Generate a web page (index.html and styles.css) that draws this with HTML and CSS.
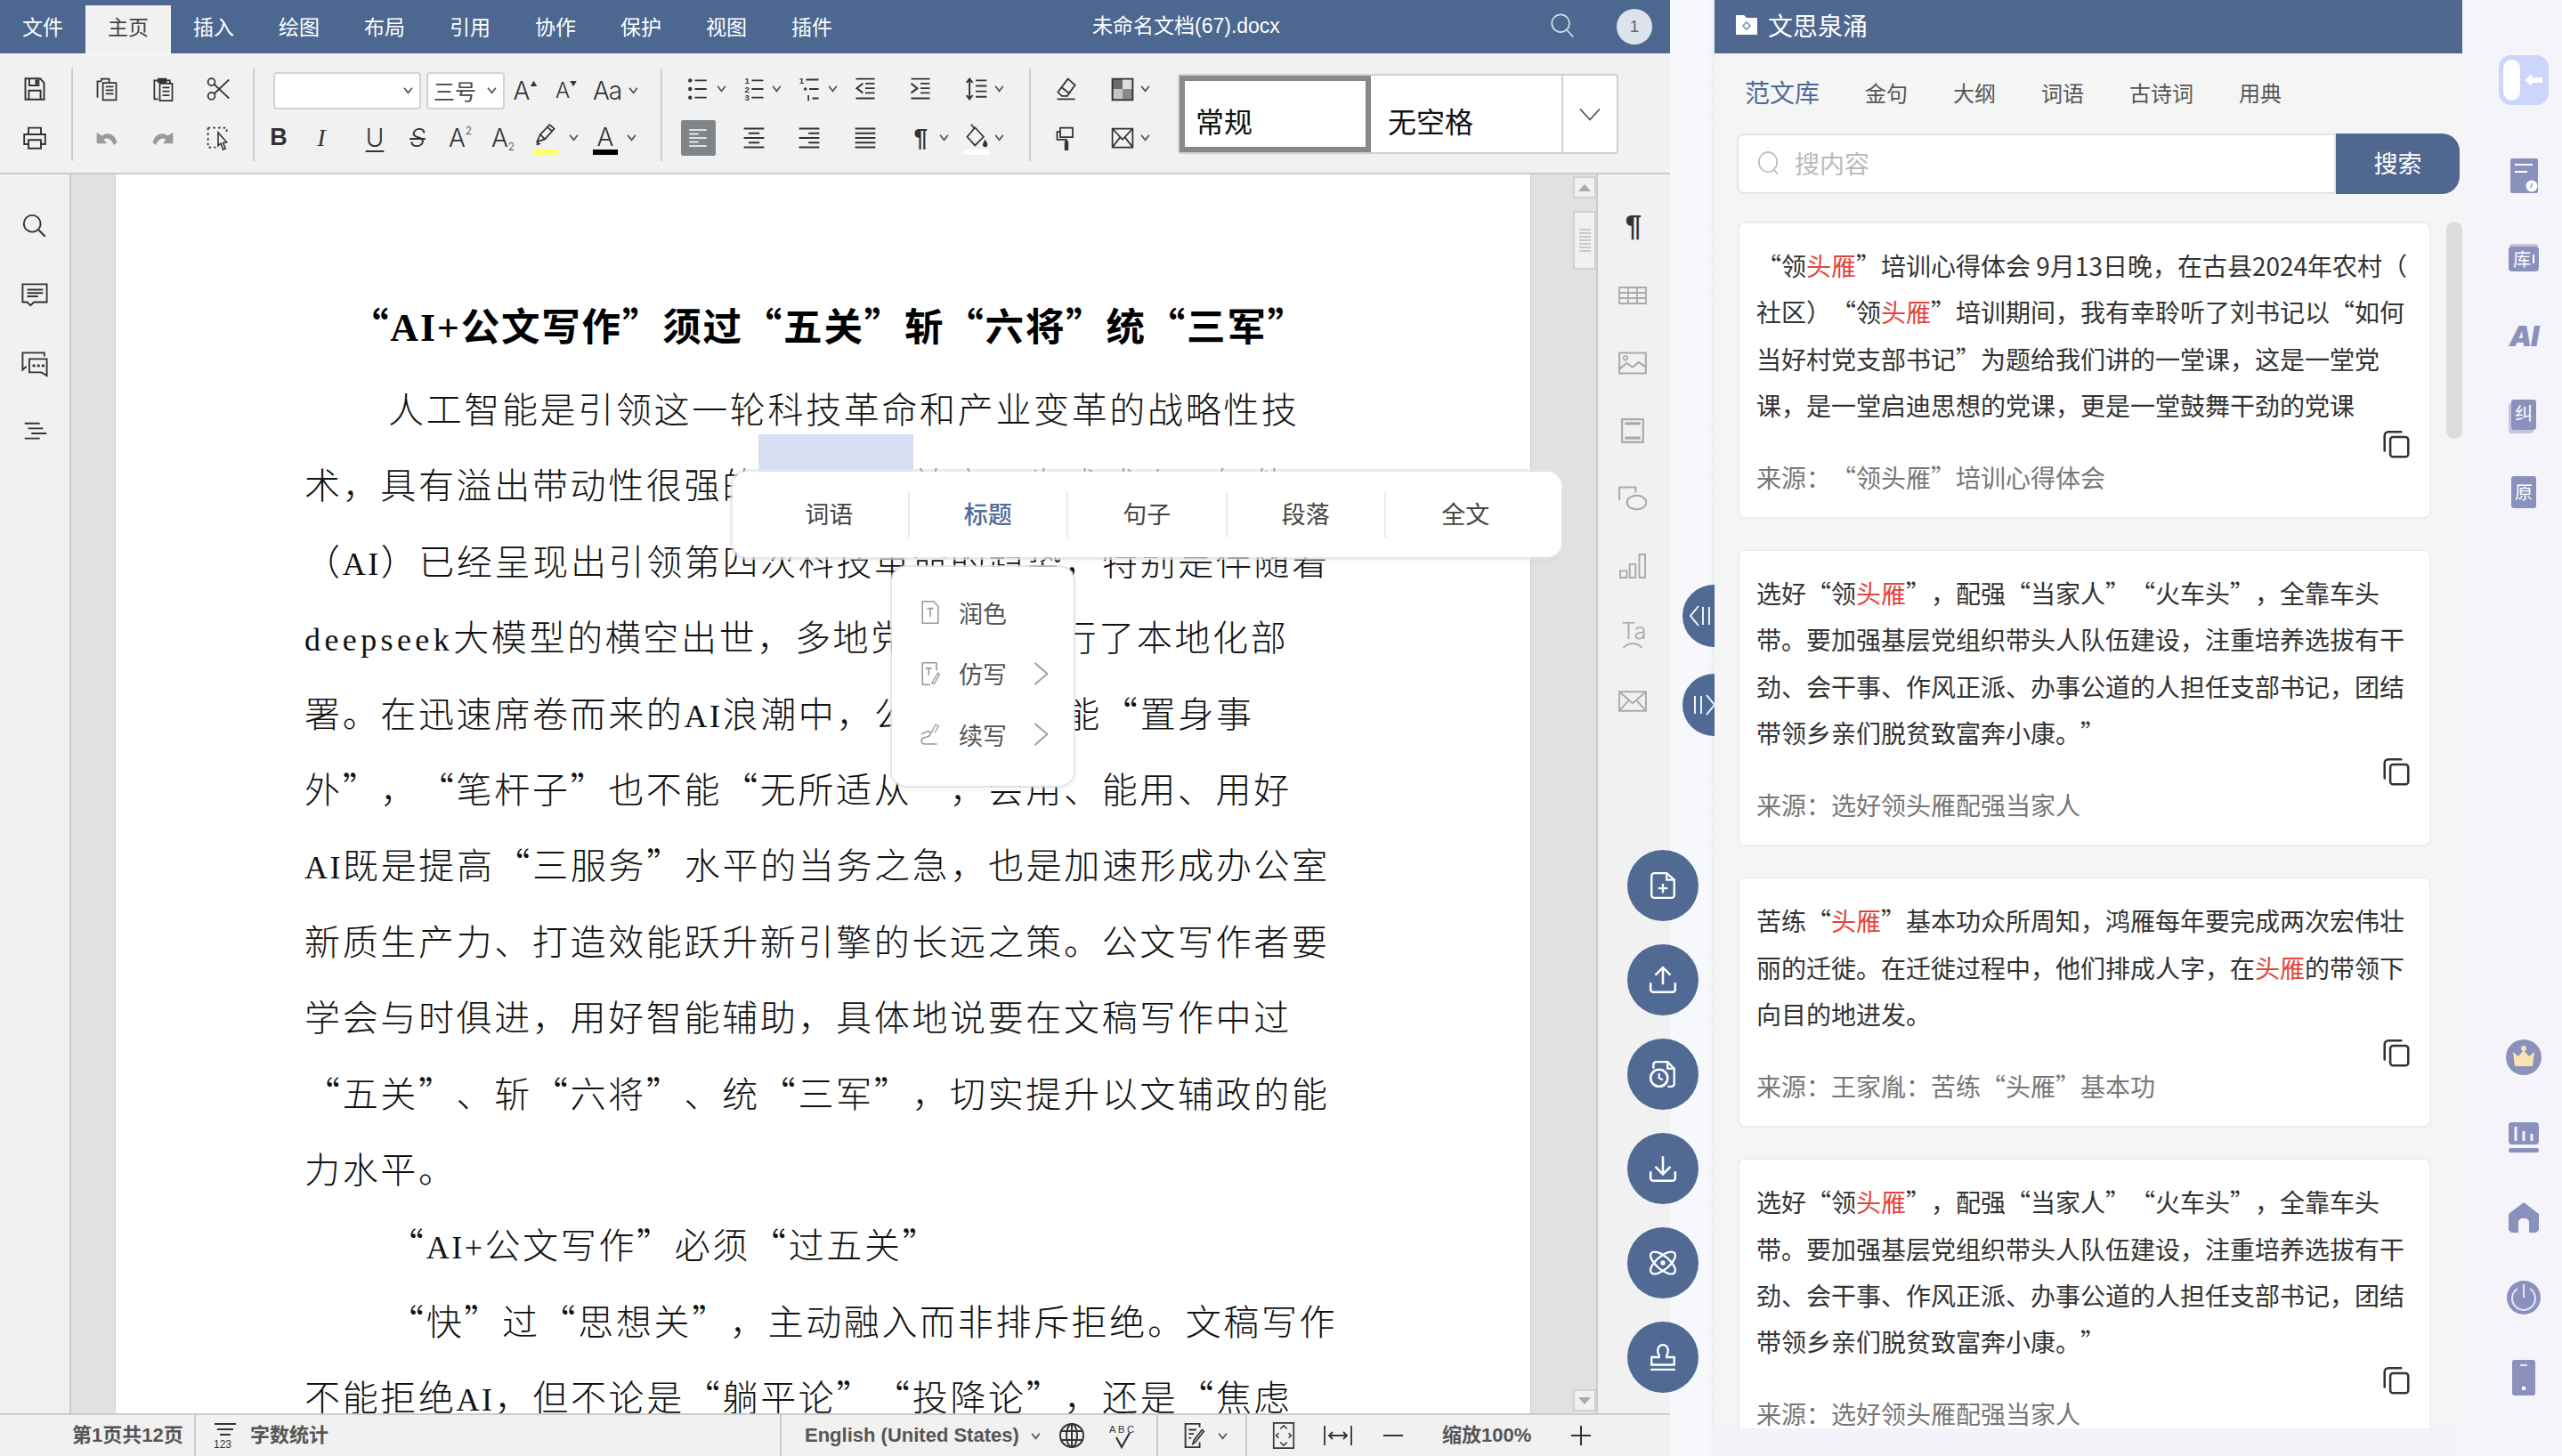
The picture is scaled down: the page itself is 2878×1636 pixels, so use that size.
FILE: index.html
```html
<!DOCTYPE html>
<html lang="zh-CN">
<head>
<meta charset="utf-8">
<title>未命名文档(67).docx</title>
<link rel="stylesheet" href="styles.css">
</head>
<body>
<svg class="defs" width="0" height="0">
  <symbol id="chev" viewBox="0 0 10 8"><path d="M1 1.5 5 6.5 9 1.5" fill="none" stroke="#555" stroke-width="1.6"/></symbol>
  <symbol id="copydoc" viewBox="0 0 32 32"><path d="M3.500 23V7A4 4 0 0 1 7.500 3H21" fill="none" stroke="currentColor" stroke-width="2.400" stroke-linecap="round"/><rect x="9.500" y="8.500" width="19" height="21" rx="3" fill="none" stroke="currentColor" stroke-width="2.400"/></symbol>
</svg>
<div class="root">
  <div class="app">
    <header class="topbar">
      <nav class="tabs">
        <span class="tab">文件</span><span class="tab on">主页</span><span class="tab">插入</span><span class="tab">绘图</span><span class="tab">布局</span><span class="tab">引用</span><span class="tab">协作</span><span class="tab">保护</span><span class="tab">视图</span><span class="tab">插件</span>
      </nav>
      <div class="doc-name">未命名文档(67).docx</div>
      <svg class="top-search" viewBox="0 0 32 32"><circle cx="14" cy="13" r="10.500" fill="none" stroke="#d5dce8" stroke-width="1.800"/><path d="M21.500 21 29 29.500" stroke="#d5dce8" stroke-width="1.800"/></svg>
      <span class="badge">1</span>
    </header>

    <section class="ribbon">
      <div class="grp g1">
        <div class="row">
          <span class="cell w81"><svg class="ic" viewBox="0 0 32 32"><path d="M4 2.500H23L28 8V29.500H4ZM9 3V11.500H21V3M8.500 29V18H23.500V29" fill="none" stroke="currentColor" stroke-width="2.200"/><path d="M16.500 4H20V10H16.500Z" fill="currentColor"/></svg></span>
        </div>
        <div class="row">
          <span class="cell w81"><svg class="ic" viewBox="0 0 32 32"><path d="M8 11V3H24V11M8 24H2.500V11.500H29.500V24H24M8 18.500H24V29.500H8Z" fill="none" stroke="currentColor" stroke-width="2.200"/></svg></span>
        </div>
      </div>
      <div class="grp g2">
        <div class="row">
          <span class="cell w62"><svg class="ic" viewBox="0 0 32 32"><path d="M9 6V3H19V7M4 27V6H9M11 8H28V30H11ZM14.500 13H24.500M14.500 17.500H24.500M14.500 22H24.500" fill="none" stroke="currentColor" stroke-width="2"/></svg></span>
          <span class="cell w62"><svg class="ic" viewBox="0 0 32 32"><path d="M10 5H5V29H10M20 5H25V9M12 9H28V31H12ZM15.500 14H24.500M15.500 19H24.500M15.500 24H24.500" fill="none" stroke="currentColor" stroke-width="2"/><path d="M9 2H21V8H9Z" fill="currentColor"/></svg></span>
          <span class="cell w62"><svg class="ic" viewBox="0 0 32 32"><circle cx="7.500" cy="7" r="4.500" fill="none" stroke="currentColor" stroke-width="2"/><circle cx="7.500" cy="25" r="4.500" fill="none" stroke="currentColor" stroke-width="2"/><path d="M11 10 30 28M11 22 30 4" stroke="currentColor" stroke-width="2"/></svg></span>
        </div>
        <div class="row">
          <span class="cell w62"><svg class="ic" viewBox="0 0 32 32"><path d="M3 9V23H16L12 18C16 15 21 16 25 25L29 22C27 13 19 7 10 13Z" fill="#9a9a9a"/></svg></span>
          <span class="cell w62"><svg class="ic" viewBox="0 0 32 32"><path d="M29 9V23H16L20 18C16 15 11 16 7 25L3 22C5 13 13 7 22 13Z" fill="#9a9a9a"/></svg></span>
          <span class="cell w62"><svg class="ic" viewBox="0 0 32 32"><path d="M3 3H27V10M3 3V28H13" fill="none" stroke="currentColor" stroke-width="2" stroke-dasharray="3 3.500"/><path d="M16 9V26L19.500 23 22.500 31 25.500 29.500 22.500 22.500 27 21.500Z" fill="#f1f1f1" stroke="currentColor" stroke-width="1.800"/></svg></span>
        </div>
      </div>
      <div class="grp g3">
        <div class="row r-font">
          <span class="sel sel-font"><svg class="chev"><use href="#chev"/></svg></span>
          <span class="sel sel-size">三号<svg class="chev"><use href="#chev"/></svg></span>
          <span class="cell w46 glyph">A<sup class="tri">▲</sup></span>
          <span class="cell w46 glyph g-sm">A<sup class="tri">▼</sup></span>
          <span class="cell w46 glyph aa">Aa</span>
          <svg class="chev"><use href="#chev"/></svg>
        </div>
        <div class="row r-fmt">
          <span class="cell w48 bold">B</span>
          <span class="cell w48 ital">I</span>
          <span class="cell w48 glyph und">U</span>
          <span class="cell w48 glyph str">S</span>
          <span class="cell w48 glyph">A<sup class="mini">2</sup></span>
          <span class="cell w48 glyph">A<sub class="mini">2</sub></span>
          <span class="cell w48 stack"><svg class="ic" viewBox="0 0 32 32"><path d="M5 24 9 15 21 2.500 27 7.500 15 21ZM9 15 15 21M18 5.500 24 10.500" fill="none" stroke="currentColor" stroke-width="2"/><path d="M5 24 4 29 10 27Z" fill="currentColor"/></svg><i class="swatch sw-y"></i></span>
          <svg class="chev c-pen"><use href="#chev"/></svg>
          <span class="cell w44 stack glyph c-a">A<i class="swatch sw-k"></i></span>
          <svg class="chev"><use href="#chev"/></svg>
        </div>
      </div>
      <div class="grp g4">
        <div class="row">
          <span class="cell w62"><svg class="ic" viewBox="0 0 32 32"><path d="M12 5H27M12 16H27M12 27H27" stroke="currentColor" stroke-width="2.200"/><circle cx="6" cy="5" r="2.500" fill="currentColor"/><circle cx="6" cy="16" r="2.500" fill="currentColor"/><circle cx="6" cy="27" r="2.500" fill="currentColor"/></svg><svg class="chev"><use href="#chev"/></svg></span>
          <span class="cell w62"><svg class="ic" viewBox="0 0 32 32"><path d="M13 5H28M13 16H28M13 27H28" stroke="currentColor" stroke-width="2.200"/><text class="svgn" x="4" y="9">1</text><text class="svgn" x="4" y="20">2</text><text class="svgn" x="4" y="31">3</text></svg><svg class="chev"><use href="#chev"/></svg></span>
          <span class="cell w62"><svg class="ic" viewBox="0 0 32 32"><path d="M12 4H28M16 16H28M20 28H28" stroke="currentColor" stroke-width="2.200"/><text class="svgn" x="3" y="9">1</text><circle cx="11" cy="16" r="2" fill="currentColor"/><path d="M15 24V31" stroke="currentColor" stroke-width="2"/></svg><svg class="chev"><use href="#chev"/></svg></span>
          <span class="cell w62"><svg class="ic" viewBox="0 0 32 32"><path d="M4 3H28M16 9H28M16 15H28M16 21H28M4 28H28M13 9 5 15 13 21" fill="none" stroke="currentColor" stroke-width="2.200"/></svg></span>
          <span class="cell w62"><svg class="ic" viewBox="0 0 32 32"><path d="M4 3H28M16 9H28M16 15H28M16 21H28M4 28H28M4 9 12 15 4 21" fill="none" stroke="currentColor" stroke-width="2.200"/></svg></span>
          <span class="cell w62"><svg class="ic" viewBox="0 0 32 32"><path d="M15 5H29M15 12H29M15 19H29M15 26H29M7 3V29M3 8 7 3 11 8M3 24 7 29 11 24" fill="none" stroke="currentColor" stroke-width="2.200"/></svg><svg class="chev"><use href="#chev"/></svg></span>
        </div>
        <div class="row">
          <span class="cell w62"><span class="al-on"><svg class="ic" viewBox="0 0 32 32"><path d="M3 4H29M3 10H17M3 16H29M3 22H17M3 28H29" stroke="#fff" stroke-width="2.200"/></svg></span></span>
          <span class="cell w62"><svg class="ic" viewBox="0 0 32 32"><path d="M3 4H29M9 10H23M3 16H29M9 22H23M3 28H29" stroke="currentColor" stroke-width="2.200"/></svg></span>
          <span class="cell w62"><svg class="ic" viewBox="0 0 32 32"><path d="M3 4H29M15 10H29M3 16H29M15 22H29M3 28H29" stroke="currentColor" stroke-width="2.200"/></svg></span>
          <span class="cell w62"><svg class="ic" viewBox="0 0 32 32"><path d="M3 4H29M3 10H29M3 16H29M3 22H29M3 28H29" stroke="currentColor" stroke-width="2.200"/></svg></span>
          <span class="cell w62"><span class="para">¶</span><svg class="chev"><use href="#chev"/></svg></span>
          <span class="cell w62 stack"><svg class="ic" viewBox="0 0 32 32"><path d="M9 2 14 8M14 6 25 18 14 29 4 18Z" fill="none" stroke="currentColor" stroke-width="2"/><path d="M27 21C29 25 30 26 30 28A3 3 0 0 1 24 28C24 26 25 25 27 21Z" fill="currentColor"/></svg><i class="swatch sw-w"></i><svg class="chev"><use href="#chev"/></svg></span>
        </div>
      </div>
      <div class="grp g5">
        <div class="row">
          <span class="cell w63"><svg class="ic" viewBox="0 0 32 32"><path d="M18 3 27 11 17 25H10L5 20ZM10 14 20 22M4 29H27" fill="none" stroke="currentColor" stroke-width="2"/></svg></span>
          <span class="cell w63"><svg class="ic" viewBox="0 0 32 32"><path d="M3 3H16V16H3Z" fill="#6b6b6b"/><path d="M16 3H29V16H16Z" fill="#dedede"/><path d="M3 16H16V29H3Z" fill="#c5c5c5"/><path d="M16 16H29V29H16Z" fill="#8b8b8b"/><path d="M3 3H29V30H3Z" fill="none" stroke="currentColor" stroke-width="2.200"/></svg><svg class="chev"><use href="#chev"/></svg></span>
        </div>
        <div class="row">
          <span class="cell w63"><svg class="ic" viewBox="0 0 32 32"><path d="M8 3H24V15H8ZM8 8H4V18H16V21" fill="none" stroke="currentColor" stroke-width="2"/><path d="M13.500 20H18.500V32H13.500Z" fill="currentColor"/></svg></span>
          <span class="cell w63"><svg class="ic" viewBox="0 0 32 32"><path d="M3 4H29V28H3ZM3 4 16 18 29 4M3 28 13 15M29 28 19 15" fill="none" stroke="currentColor" stroke-width="2"/></svg><svg class="chev"><use href="#chev"/></svg></span>
        </div>
      </div>
      <div class="styles">
        <span class="style active">常规</span>
        <span class="style">无空格</span>
        <span class="style-more"><svg viewBox="0 0 24 14"><path d="M1 1 12 13 23 1" fill="none" stroke="#555" stroke-width="1.800"/></svg></span>
      </div>
    </section>

    <main class="work">
      <aside class="lbar">
        <svg class="li" viewBox="0 0 32 32"><circle cx="13" cy="12" r="10" fill="none" stroke="currentColor" stroke-width="2"/><path d="M20.500 19.500 28.500 27.500" stroke="currentColor" stroke-width="2.200"/></svg>
        <svg class="li" viewBox="0 0 32 32"><path d="M1.500 2.500H30.500V24H15L11 28 7 24H1.500Z" fill="none" stroke="currentColor" stroke-width="2"/><path d="M7 9H26M7 13H26M7 17H20" stroke="currentColor" stroke-width="2"/></svg>
        <svg class="li" viewBox="0 0 32 32"><path d="M1.500 20V2.500H27.500V7M1.500 20V23L6 19" fill="none" stroke="currentColor" stroke-width="2"/><path d="M9.500 10H30.500V30L24 26H9.500Z" fill="none" stroke="currentColor" stroke-width="2"/><circle cx="15" cy="18" r="1.800" fill="currentColor"/><circle cx="20.500" cy="18" r="1.800" fill="currentColor"/><circle cx="26" cy="18" r="1.800" fill="currentColor"/></svg>
        <svg class="li" viewBox="0 0 32 32"><path d="M4 5H22M8 11H26M12 17H30M4 23H22" stroke="currentColor" stroke-width="2"/></svg>
      </aside>
      <div class="gutter"></div>
      <article class="page">
        <h1 class="doc-title">“<span class="lat-b">AI+</span>公文写作”须过“五关”斩“六将”统“三军”</h1>
        <div class="ln ind">人工智能是引领这一轮科技革命和产业变革的战略性技</div>
        <div class="ln">术，具有溢出带动性很强的“头雁”效应，生成式人工智能</div>
        <div class="ln">（<span class="lat">AI</span>）已经呈现出引领第四次科技革命的趋势，特别是伴随着</div>
        <div class="ln"><span class="lat lat-w">deepseek</span>大模型的横空出世，多地党政机关进行了本地化部</div>
        <div class="ln">署。在迅速席卷而来的<span class="lat">AI</span>浪潮中，公文写作不能“置身事</div>
        <div class="ln">外”，“笔杆子”也不能“无所适从”，会用、能用、用好</div>
        <div class="ln"><span class="lat">AI</span>既是提高“三服务”水平的当务之急，也是加速形成办公室</div>
        <div class="ln">新质生产力、打造效能跃升新引擎的长远之策。公文写作者要</div>
        <div class="ln">学会与时俱进，用好智能辅助，具体地说要在文稿写作中过</div>
        <div class="ln">“五关”、斩“六将”、统“三军”，切实提升以文辅政的能</div>
        <div class="ln">力水平。</div>
        <div class="ln ind">“<span class="lat">AI+</span>公文写作”必须“过五关”</div>
        <div class="ln ind">“快”过“思想关”，主动融入而非排斥拒绝。文稿写作</div>
        <div class="ln">不能拒绝<span class="lat">AI</span>，但不论是“躺平论”“投降论”，还是“焦虑</div>
      </article>
      <div class="gutter2">
        <div class="sb-btn"><i class="tri-up"></i></div>
        <div class="sb-thumb"><b></b></div>
        <div class="sb-space"></div>
        <div class="sb-btn"><i class="tri-down"></i></div>
      </div>
      <aside class="rbar">
        <span class="pil">¶</span>
        <svg class="ri" viewBox="0 0 32 20"><path d="M1 1H31V19H1ZM1 7H31M1 13H31M11 1V19M21 1V19" fill="none" stroke="currentColor" stroke-width="1.800"/></svg>
        <svg class="ri" viewBox="0 0 28 22"><path d="M1 1H27V21H1ZM1 17 8 11 14 15 20 10 27 15" fill="none" stroke="currentColor" stroke-width="1.800"/><circle cx="7" cy="6" r="2" fill="none" stroke="currentColor" stroke-width="1.500"/></svg>
        <svg class="ri" viewBox="0 0 24 26"><path d="M1 1H23V25H1Z" fill="none" stroke="currentColor" stroke-width="2"/><path d="M4 4H20V7H4ZM4 19H20V22H4Z" fill="currentColor"/></svg>
        <svg class="ri" viewBox="0 0 28 24"><path d="M1 14V1H17V6" fill="none" stroke="currentColor" stroke-width="1.800"/><ellipse cx="18" cy="16" rx="9.500" ry="6.800" fill="none" stroke="currentColor" stroke-width="1.800"/></svg>
        <svg class="ri" viewBox="0 0 28 26"><path d="M1 18H8V25H1ZM11 11H17V25H11ZM21 1H27V25H21Z" fill="none" stroke="currentColor" stroke-width="1.800"/></svg>
        <svg class="ri ri-ta" viewBox="0 0 24 32"><text class="svgta" x="0" y="22">Ta</text><path d="M2 31C8 25 16 25 22 31" fill="none" stroke="currentColor" stroke-width="1.500"/></svg>
        <svg class="ri" viewBox="0 0 30 22"><path d="M1 1H29V21H1ZM1 1 15 13 29 1M1 21 11 10M29 21 19 10" fill="none" stroke="currentColor" stroke-width="1.800"/></svg>
      </aside>
    </main>

    <footer class="status">
      <span class="st-page">第1页共12页</span>
      <span class="st-words">
        <svg class="st-ic" viewBox="0 0 26 30"><path d="M1 2H25M4 8H22M7 14H19" stroke="#333" stroke-width="2"/><text class="svg123" x="0" y="29">123</text></svg>
        字数统计
      </span>
      <span class="st-lang">English (United States)<svg class="chev"><use href="#chev"/></svg>
        <svg class="st-ic globe" viewBox="0 0 30 30"><circle cx="15" cy="15" r="13" fill="none" stroke="#333" stroke-width="2"/><ellipse cx="15" cy="15" rx="6" ry="13" fill="none" stroke="#333" stroke-width="2"/><path d="M15 2V28M2 10H28M2 20H28" stroke="#333" stroke-width="2"/></svg>
        <svg class="st-ic abc" viewBox="0 0 30 30"><text class="svgabc" x="1" y="12" textLength="28">ABC</text><path d="M9 17 15 28 24 12" fill="none" stroke="#333" stroke-width="2.200"/></svg>
      </span>
      <span class="st-edit">
        <svg class="st-ic" viewBox="0 0 24 32"><path d="M19 6V2H2V30H19V24" fill="none" stroke="#333" stroke-width="2"/><path d="M6 9H15M6 14H12M6 19H9" stroke="#333" stroke-width="2"/><path d="M12 22 22 9 24 11 14 24 11 26Z" fill="none" stroke="#333" stroke-width="1.800"/></svg>
        <svg class="chev"><use href="#chev"/></svg>
      </span>
      <span class="st-zoom">
        <svg class="st-ic" viewBox="0 0 26 32"><path d="M1 1H25V31H1Z" fill="none" stroke="#333" stroke-width="1.800"/><path d="M9 8 13 4 17 8M9 24 13 28 17 24M7 13 4 16 7 19M19 13 22 16 19 19" fill="none" stroke="#333" stroke-width="1.600"/></svg>
        <svg class="st-ic wfit" viewBox="0 0 32 24"><path d="M1 1V23M31 1V23M6 12H26M10 8 6 12 10 16M22 8 26 12 22 16" fill="none" stroke="#333" stroke-width="1.800"/></svg>
        <svg class="st-ic minus" viewBox="0 0 22 4"><path d="M0 2H22" stroke="#333" stroke-width="2"/></svg>
        <span class="zoom-val">缩放100%</span>
        <svg class="st-ic plus" viewBox="0 0 22 22"><path d="M0 11H22M11 0V22" stroke="#333" stroke-width="2"/></svg>
      </span>
    </footer>
  </div>

  <div class="mid"></div>

  <section class="panel">
    <header class="p-head">
      <svg class="p-logo" viewBox="0 0 26 24"><path d="M1 1H10L13 4H25V23H1Z" fill="#fff"/><path d="M13 9 17 13 13 17 9 13Z" fill="none" stroke="#7d93b5" stroke-width="1.600"/></svg>
      <span>文思泉涌</span>
    </header>
    <nav class="p-tabs">
      <span class="pt on">范文库</span><span class="pt">金句</span><span class="pt">大纲</span><span class="pt">词语</span><span class="pt">古诗词</span><span class="pt">用典</span>
    </nav>
    <div class="p-search">
      <div class="p-input">
        <svg class="p-glass" viewBox="0 0 28 32"><ellipse cx="13" cy="15" rx="11" ry="12" fill="none" stroke="#bbb" stroke-width="1.800"/><path d="M20 24 25 30" stroke="#bbb" stroke-width="1.800"/></svg>
        <span>搜内容</span>
      </div>
      <button class="p-btn">搜索</button>
    </div>
    <div class="p-list">
      <div class="p-scroll"></div>
      <div class="card">
        <div class="ct">“领<em>头雁</em>”培训心得体会 9月13日晚，在古县2024年农村（</div>
        <div class="ct">社区）“领<em>头雁</em>”培训期间，我有幸聆听了刘书记以“如何</div>
        <div class="ct">当好村党支部书记”为题给我们讲的一堂课，这是一堂党</div>
        <div class="ct">课，是一堂启迪思想的党课，更是一堂鼓舞干劲的党课</div>
        <div class="copy"><svg viewBox="0 0 32 32"><use href="#copydoc"/></svg></div>
        <div class="src">来源：“领头雁”培训心得体会</div>
      </div>
      <div class="card">
        <div class="ct">选好“领<em>头雁</em>”，配强“当家人”“火车头”，全靠车头</div>
        <div class="ct">带。要加强基层党组织带头人队伍建设，注重培养选拔有干</div>
        <div class="ct">劲、会干事、作风正派、办事公道的人担任支部书记，团结</div>
        <div class="ct">带领乡亲们脱贫致富奔小康。”</div>
        <div class="copy"><svg viewBox="0 0 32 32"><use href="#copydoc"/></svg></div>
        <div class="src">来源：选好领头雁配强当家人</div>
      </div>
      <div class="card">
        <div class="ct">苦练“<em>头雁</em>”基本功众所周知，鸿雁每年要完成两次宏伟壮</div>
        <div class="ct">丽的迁徙。在迁徙过程中，他们排成人字，在<em>头雁</em>的带领下</div>
        <div class="ct">向目的地进发。</div>
        <div class="copy"><svg viewBox="0 0 32 32"><use href="#copydoc"/></svg></div>
        <div class="src">来源：王家胤：苦练“头雁”基本功</div>
      </div>
      <div class="card">
        <div class="ct">选好“领<em>头雁</em>”，配强“当家人”“火车头”，全靠车头</div>
        <div class="ct">带。要加强基层党组织带头人队伍建设，注重培养选拔有干</div>
        <div class="ct">劲、会干事、作风正派、办事公道的人担任支部书记，团结</div>
        <div class="ct">带领乡亲们脱贫致富奔小康。”</div>
        <div class="copy"><svg viewBox="0 0 32 32"><use href="#copydoc"/></svg></div>
        <div class="src">来源：选好领头雁配强当家人</div>
      </div>
    </div>
  </section>

  <aside class="rail">
    <div class="toggle"><i></i><svg viewBox="0 0 20 16"><path d="M0 8 8 1V5H20V11H8V15Z" fill="#fff"/></svg></div>
    <svg class="ra r-doc" viewBox="0 0 31 39"><rect width="31" height="39" rx="2" fill="#8b91bd"/><path d="M5 7H25M5 15H19" stroke="#fff" stroke-width="2"/><circle cx="24" cy="31" r="6.500" fill="#fff"/><path d="M24 28V31L22 33" stroke="#8b91bd" stroke-width="1.200" fill="none"/></svg>
    <div class="r-folder"><span>库</span><i></i></div>
    <div class="r-ai">AI</div>
    <div class="r-jiu"><span>纠</span></div>
    <div class="r-yuan">原</div>
    <div class="rail-space"></div>
    <svg class="ra r-crown" viewBox="0 0 40 40"><circle cx="20" cy="20" r="20" fill="#8b91bd"/><path d="M8 14 14 19 20 12 26 19 32 14 30 30H10Z" fill="#f9e3b4"/><circle cx="20" cy="10" r="3" fill="#f9e3b4"/></svg>
    <svg class="ra r-chart" viewBox="0 0 34 34"><rect width="34" height="25" rx="4" fill="#8b91bd"/><rect y="29" width="34" height="5" rx="2.500" fill="#8b91bd"/><path d="M8 5V21M17 10V21M26 13V21" stroke="#f4f4fa" stroke-width="3"/></svg>
    <svg class="ra r-home" viewBox="0 0 34 34"><path d="M17 0 34 13V31L31 34H3L0 31V13Z" fill="#8b91bd"/><path d="M11 34V21L14 18H20L23 21V34Z" fill="#f4f4fa"/></svg>
    <svg class="ra r-power" viewBox="0 0 38 38"><circle cx="19" cy="19" r="19" fill="#8b91bd"/><path d="M12 9A13 13 0 1 0 26 9" fill="none" stroke="#e6e7f4" stroke-width="2"/><path d="M19 4V19" stroke="#e6e7f4" stroke-width="2"/></svg>
    <svg class="ra r-phone" viewBox="0 0 26 40"><rect width="26" height="40" rx="3" fill="#8b91bd"/><path d="M9 6H17" stroke="#e6e7f4" stroke-width="2"/><rect x="11" y="30" width="4" height="4" fill="#fff"/></svg>
  </aside>

  <div class="sel-mark"></div>
  <div class="pop-scope">
    <span class="sc">词语</span><span class="sc on">标题</span><span class="sc">句子</span><span class="sc">段落</span><span class="sc">全文</span>
  </div>
  <div class="pop-menu">
    <div class="mi"><svg viewBox="0 0 24 32"><path d="M2 2H16L22 8V30H2ZM8 11H16M12 11V22" fill="none" stroke="#999" stroke-width="1.800"/></svg><span>润色</span></div>
    <div class="mi"><svg viewBox="0 0 24 32"><path d="M12 30H2V2H20V12M6 9H14M10 9V18" fill="none" stroke="#999" stroke-width="1.800"/><path d="M14 28 22 15 24 17 17 29Z" fill="none" stroke="#999" stroke-width="1.500"/></svg><span>仿写</span><svg class="mi-ch" viewBox="0 0 16 26"><path d="M1 1 15 13 1 25" fill="none" stroke="#999" stroke-width="1.800"/></svg></div>
    <div class="mi"><svg viewBox="0 0 26 32"><path d="M1 16 10 12C14 11 14 18 10 19L4 21C0 23 1 29 5 29H22" fill="none" stroke="#999" stroke-width="1.800"/><path d="M14 15 20 3 24 5 19 14" fill="none" stroke="#999" stroke-width="1.500"/></svg><span>续写</span><svg class="mi-ch" viewBox="0 0 16 26"><path d="M1 1 15 13 1 25" fill="none" stroke="#999" stroke-width="1.800"/></svg></div>
  </div>

  <div class="handle h1"><svg viewBox="0 0 26 24"><path d="M10 1 1 12 10 23M15 2V22M22 2V22" fill="none" stroke="#fff" stroke-width="1.800"/></svg></div>
  <div class="handle h2"><svg viewBox="0 0 26 24"><path d="M2 2V22M9 2V22M15 1 24 12 15 23" fill="none" stroke="#fff" stroke-width="1.800"/></svg></div>

  <div class="fabs">
    <span class="fab"><svg viewBox="0 0 32 32"><path d="M20 3H7A3 3 0 0 0 4 6V26A3 3 0 0 0 7 29H25A3 3 0 0 0 28 26V10ZM20 3V10H28M16 14V24M11 19H21" fill="none" stroke="#fff" stroke-width="2.200"/></svg></span>
    <span class="fab"><svg viewBox="0 0 32 32"><path d="M16 21V4M8 11 16 3 24 11M3 19V26A3 3 0 0 0 6 29H26A3 3 0 0 0 29 26V19" fill="none" stroke="#fff" stroke-width="2.400"/></svg></span>
    <span class="fab"><svg viewBox="0 0 32 32"><path d="M6 10V6A3 3 0 0 1 9 3H21L28 10V26A3 3 0 0 1 25 29H21M21 3V10H28" fill="none" stroke="#fff" stroke-width="2.200"/><circle cx="12" cy="20" r="9" fill="none" stroke="#fff" stroke-width="2.400"/><path d="M12 15V20L16 22" fill="none" stroke="#fff" stroke-width="2"/></svg></span>
    <span class="fab"><svg viewBox="0 0 32 32"><path d="M16 3V21M8 14 16 22 24 14M3 19V26A3 3 0 0 0 6 29H26A3 3 0 0 0 29 26V19" fill="none" stroke="#fff" stroke-width="2.400"/></svg></span>
    <span class="fab"><svg viewBox="0 0 32 32"><ellipse cx="16" cy="16" rx="16" ry="7" transform="rotate(40 16 16)" fill="none" stroke="#fff" stroke-width="2.200"/><ellipse cx="16" cy="16" rx="16" ry="7" transform="rotate(-40 16 16)" fill="none" stroke="#fff" stroke-width="2.200"/><circle cx="16" cy="16" r="2.500" fill="#fff"/></svg></span>
    <span class="fab"><svg viewBox="0 0 32 32"><path d="M12 14C9 9 11 3 16 3S23 9 20 14V16H28V24H4V16H12ZM3 29H29" fill="none" stroke="#fff" stroke-width="2.200"/></svg></span>
  </div>
</div>
</body>
</html>
```
FILE: styles.css
```css
* { box-sizing: border-box; }
html, body { margin: 0; padding: 0; }
body {
  width: 2878px; height: 1636px; overflow: hidden;
  background: #f3f4f9;
  font-family: "Noto Sans CJK SC", sans-serif;
  color: #333;
  text-spacing-trim: space-all;
}
.defs { display: block; height: 0; }
.root { position: relative; display: flex; width: 2878px; height: 1636px; overflow: hidden; }
.app { width: 1876px; height: 1636px; flex: none; display: flex; flex-direction: column; background: #f1f1f1; }
.mid { width: 50px; flex: none; background: linear-gradient(90deg, #f6f8fb 85%, #eef0f4); }

/* top bar */
.topbar { height: 60px; flex: none; background: #4d6890; display: flex; align-items: flex-end; position: relative; color: #fff; }
.tabs { display: flex; height: 54px; }
.tab { width: 96px; height: 54px; display: flex; align-items: center; justify-content: center; font-size: 23px; padding-bottom: 8px; color: #fff; }
.tab.on { background: #f1f1f1; color: #444; }
.doc-name { position: absolute; left: 1227px; top: 0; height: 60px; font: 23px/58px "Liberation Sans", "Noto Sans CJK SC", sans-serif; }
.top-search { position: absolute; left: 1740px; top: 14px; width: 30px; height: 30px; }
.badge { position: absolute; left: 1816px; top: 10px; width: 40px; height: 40px; border-radius: 50%; background: #dde3ec; color: #666; font: 19px/40px "Liberation Sans", sans-serif; text-align: center; }

/* ribbon */
.ribbon { height: 136px; flex: none; display: flex; padding-top: 10px; border-bottom: 2px solid #ccc; border-top: 2px solid #f5f5f5; background: #f1f1f1; color: #333; }
.grp { display: flex; flex-direction: column; height: 110px; position: relative; flex: none; }
.grp::after { content: ""; position: absolute; right: 0; top: 5px; height: 104px; width: 2px; background: #ccc; }
.g1 { width: 82px; }
.g2 { width: 204px; padding-left: 7px; }
.g3 { width: 458px; }
.g4 { width: 414px; padding-left: 9px; }
.g5 { width: 165px; padding-left: 8px; }
.g5::after { display: none; }
.row { height: 55px; display: flex; align-items: center; }
.cell { position: relative; height: 55px; display: grid; grid-template-columns: 1fr auto 1fr; align-items: center; justify-items: center; flex: none; }
.cell > :first-child { grid-column: 2; }
.cell > .chev { grid-column: 3; justify-self: end; }
.w81 { width: 78px; }
.w62 { width: 62.500px; }
.w63 { width: 63px; }
.w46 { width: 46px; }
.w48 { width: 48px; }
.w44 { width: 44px; }
.ic { width: 28px; height: 28px; display: block; }
.chev { width: 11px; height: 9px; flex: none; display: block; }
.sel { height: 42px; background: #fff; border: 2px solid #d2d2d2; border-radius: 4px; display: flex; align-items: center; justify-content: flex-end; padding-right: 7px; flex: none; font-size: 25px; color: #444; }
.sel-font { width: 166px; margin-left: 21px; }
.sel-size { width: 88px; margin-left: 6px; justify-content: space-between; padding-left: 6px; white-space: nowrap; gap: 2px; font-size: 24px; }
.r-font { padding-top: 4px; }
.r-font > .chev { margin-left: 1px; }
.r-fmt { padding-left: 15px; }
.glyph { font: 300 28px/1 Inter, sans-serif; color: #333; }
.aa { letter-spacing: -1px; }
.g-sm { font-size: 24px; }
.glyph.w46, .glyph.w48 { display: flex; justify-content: center; align-items: center; }
.tri { font-size: 8px; line-height: 1; margin-top: -16px; }
.mini { font-size: 12px; line-height: 1; }
sup.mini { margin-top: -16px; }
sub.mini { margin-top: 20px; }
.bold { font: 700 27px "Liberation Sans", sans-serif; }
.ital { font: italic 300 28px "Liberation Serif", serif; }
.und { text-decoration: underline; text-underline-offset: 4px; text-decoration-thickness: 2px; }
.str { text-decoration: line-through; text-decoration-thickness: 2px; font-style: italic; }
.stack { position: relative; }
.swatch { position: absolute; width: 28px; height: 6px; left: 50%; margin-left: -14px; top: 41px; }
.sw-y { background: #ffff66; }
.sw-k { background: #000; }
.sw-w { background: #fff; }
.stack .ic { margin-top: -6px; }
.c-pen { margin-left: 2px; }
.c-a { margin-left: 8px; margin-right: 2px; display: flex; justify-content: center; align-items: flex-start; padding-top: 13px; }
.al-on { width: 39px; height: 40px; background: #808589; border-radius: 2px; display: flex; align-items: center; justify-content: center; }
.al-on .ic { width: 24px; height: 24px; }
.para { font: 700 28px "Liberation Sans", sans-serif; line-height: 1; color: #333; }
.svgn { font: 700 11px "Liberation Sans", sans-serif; fill: #333; }
.styles { width: 495px; height: 90px; margin: 11px 0 0; display: flex; background: #fff; border: 2px solid #d0d0d0; border-radius: 4px; flex: none; }
.style { width: 216px; font-size: 32px; color: #111; display: flex; align-items: flex-end; padding: 0 0 13px 19px; border-right: 2px solid #d0d0d0; white-space: nowrap; }
.style.active { border: 6px solid #888; width: 215px; padding: 0 0 7px 12px; margin: 0; }
.style-more { flex: 1; display: flex; align-items: center; justify-content: center; }
.style-more svg { width: 24px; height: 15px; }

/* work area */
.work { flex: 1; min-height: 0; display: flex; overflow: hidden; }
.lbar { width: 80px; flex: none; border-right: 2px solid #ccc; display: flex; flex-direction: column; align-items: center; padding-top: 44px; gap: 47px; color: #333; }
.li { width: 30px; height: 30px; flex: none; display: block; }
.gutter { width: 50px; flex: none; background: #e1e1e1; border-right: 1px solid #d0d0d0; }
.page { width: 1590px; flex: none; background: #fff; padding: 126px 0 0 212px; overflow: hidden; border-right: 1px solid #ccc; color: #111; }
.doc-title { margin: 0 0 8px; width: 1178px; text-align: center; font: 700 43.500px/86px "Noto Sans CJK SC", sans-serif; letter-spacing: 1.800px; color: #000; white-space: nowrap; }
.lat-b { font: 700 44px "Liberation Serif", serif; }
.ln { font-size: 40px; line-height: 85.400px; height: 85.400px; letter-spacing: 2.650px; white-space: nowrap; font-weight: 300; }
.ind { padding-left: 94px; }
.lat { font-family: "Liberation Serif", serif; font-size: 36px; letter-spacing: 2.500px; }
.lat-w { letter-spacing: 4.400px; }
.gutter2 { width: 75px; flex: none; background: #e1e1e1; border-right: 2px solid #ccc; padding: 2px 2px 2px 47px; display: flex; flex-direction: column; }
.sb-btn { width: 26px; height: 25px; background: #f1f1f1; border: 2px solid #d2d2d2; display: flex; align-items: center; justify-content: center; flex: none; }
.tri-up { border: 7px solid transparent; border-top: 0; border-bottom: 8px solid #aaa; }
.tri-down { border: 7px solid transparent; border-bottom: 0; border-top: 8px solid #aaa; }
.sb-thumb { width: 26px; height: 66px; margin-top: 14px; background: #f1f1f1; border: 2px solid #d2d2d2; display: flex; align-items: center; justify-content: center; flex: none; }
.sb-thumb b { width: 13px; height: 26px; background: repeating-linear-gradient(#c8c8c8 0 2px, transparent 2px 4px); }
.sb-space { flex: 1; }
.rbar { width: 78px; flex: none; background: #f1f1f1; display: flex; flex-direction: column; align-items: center; color: #aaa; padding-top: 43px; gap: 48px; }
.pil { font: 700 33px/30px "Liberation Sans", sans-serif; color: #333; height: 28px; margin-bottom: 3px; margin-left: 2px; }
.ri { width: 32px; height: 28px; flex: none; display: block; }
.ri-ta { height: 34px; margin: -3px 0; }
.svgta { font: 300 24px Inter, sans-serif; fill: #aaa; }

/* status bar */
.status { height: 48px; flex: none; border-top: 2px solid #ccc; background: #f1f1f1; display: flex; align-items: center; font: 700 22px/1 "Liberation Sans", "Noto Sans CJK SC", sans-serif; color: #555; white-space: nowrap; }
.status > span { height: 46px; display: flex; align-items: center; flex: none; }
.st-page { width: 220px; padding-left: 81px; border-right: 2px solid #ccc; }
.st-words { width: 658px; padding-left: 20px; gap: 15px; border-right: 2px solid #ccc; }
.st-lang { width: 423px; padding-left: 26px; border-right: 2px solid #ccc; }
.st-lang .chev { margin-left: 13px; }
.st-edit { width: 100px; padding-left: 27px; gap: 14px; border-right: 2px solid #ccc; }
.st-zoom { padding-left: 28px; }
.st-ic { height: 30px; width: 26px; display: block; flex: none; }
.globe { width: 30px; margin-left: 20px; }
.abc { margin-left: 26px; width: 30px; }
.svg123 { font: 400 12px "Liberation Sans", sans-serif; fill: #333; }
.svgabc { font: 400 11px "Liberation Sans", sans-serif; fill: #333; }
.wfit { width: 32px; height: 24px; margin-left: 32px; }
.minus { width: 22px; height: 4px; margin-left: 35px; }
.zoom-val { margin-left: 44px; width: 145px; }
.plus { width: 22px; height: 22px; }

/* panel */
.panel { width: 840px; height: 1605px; flex: none; background: #f5f5f6; position: relative; z-index: 2; display: flex; flex-direction: column; box-shadow: -1px 0 3px rgba(0,0,0,.04); }
.p-head { height: 60px; flex: none; background: #506890; color: #fff; display: flex; align-items: center; font-size: 28px; padding: 0 0 4px 23px; gap: 11px; }
.p-logo { width: 26px; height: 24px; }
.p-tabs { height: 90px; flex: none; display: flex; padding-left: 34px; align-items: center; gap: 51px; font-size: 24px; color: #555; }
.pt.on { font-size: 28px; color: #4f6a95; }
.pt { margin-top: -4px; }
.p-search { height: 68px; flex: none; margin-left: 25px; width: 812px; display: flex; }
.p-input { width: 673px; height: 68px; background: #fff; border: 2px solid #e3e3e8; border-radius: 8px 0 0 8px; display: flex; align-items: center; padding: 0 0 3px 21px; gap: 16px; font-size: 28px; color: #bbb; }
.p-glass { width: 26px; height: 30px; }
.p-btn { width: 139px; height: 68px; border: 0; background: #506890; color: #fff; font: 27px "Noto Sans CJK SC", sans-serif; border-radius: 0 20px 20px 0; padding: 0 0 3px; }
.p-list { flex: 1; min-height: 0; margin-top: 31px; padding-left: 26px; overflow: hidden; position: relative; }
.p-scroll { position: absolute; right: 0; top: 0; width: 18px; height: 244px; background: #dcdcdc; border-radius: 9px; }
.card { width: 779px; background: #fff; border: 2px solid #ededf0; border-radius: 8px; padding: 21px 12px 26px 19px; margin-bottom: 34px; }
.ct { font-size: 28px; line-height: 52.300px; color: #333; white-space: nowrap; }
.ct em { font-style: normal; color: #e2453f; }
.copy { height: 36px; display: flex; justify-content: flex-end; align-items: center; padding-right: 8px; color: #333; }
.copy svg { width: 34px; height: 34px; }
.src { font-size: 28px; line-height: 38px; color: #777; white-space: nowrap; }

/* right rail */
.rail { width: 112px; height: 1636px; flex: none; background: #f4f4fa; display: flex; flex-direction: column; align-items: center; padding: 62px 0 68px 26px; position: relative; z-index: 2; }
.toggle { width: 56px; height: 56px; background: #ccd5fb; border-radius: 14px; display: flex; align-items: center; padding-left: 5px; gap: 5px; flex: none; }
.toggle i { width: 19px; height: 46px; background: #fff; border-radius: 10px; display: block; }
.toggle svg { width: 20px; height: 16px; }
.ra { display: block; flex: none; }
.r-doc { width: 31px; height: 39px; margin-top: 60px; }
.r-folder { width: 34px; height: 28px; margin-top: 60px; background: #8b91bd; border-radius: 4px; display: flex; align-items: center; justify-content: center; color: #fff; font-size: 20px; line-height: 1; gap: 2px; box-shadow: 0 -4px 0 -1px #c3c6df; flex: none; }
.r-folder i { width: 2px; height: 10px; background: #fff; }
.r-ai { width: 40px; height: 25px; margin-top: 60px; font: italic 900 32px/25px Inter, "Liberation Sans", sans-serif; color: #8b91bd; letter-spacing: -1px; text-align: center; flex: none; }
.r-jiu { width: 28px; height: 34px; margin-top: 59px; background: #8b91bd; border-radius: 3px; color: #fff; font-size: 20px; line-height: 30px; text-align: center; box-shadow: -3px 4px 0 0 #c3c6df; flex: none; }
.r-yuan { width: 28px; height: 36px; margin-top: 52px; background: #8b91bd; border-radius: 3px; color: #fff; font-size: 20px; line-height: 36px; text-align: center; flex: none; }
.rail-space { flex: 1; }
.r-crown { width: 40px; height: 40px; }
.r-chart { width: 34px; height: 34px; margin-top: 53px; }
.r-home { width: 34px; height: 34px; margin-top: 56px; }
.r-power { width: 38px; height: 38px; margin-top: 54px; }
.r-phone { width: 26px; height: 40px; margin-top: 51px; }

/* overlays */
.sel-mark { position: absolute; left: 852px; top: 488px; width: 174px; height: 44px; background: #d7e0f2; }
.pop-scope { position: absolute; left: 823px; top: 530px; width: 931px; height: 96px; background: #fff; border-radius: 16px; box-shadow: 0 0 0 3px rgba(230,230,230,.7), 0 3px 8px rgba(0,0,0,.06); display: flex; align-items: center; z-index: 3; padding-left: 20px; }
.sc { width: 178.500px; height: 52px; display: flex; align-items: center; justify-content: center; font-size: 27px; padding-bottom: 4px; color: #444; border-right: 2px solid #eaeaea; flex: none; }
.sc:last-child { border-right: 0; }
.sc.on { color: #4f6b9b; font-weight: 500; }
.pop-menu { position: absolute; left: 1002px; top: 637px; width: 204px; height: 246px; background: #fff; border-radius: 16px; box-shadow: 0 0 0 2px rgba(225,225,225,.8), 0 3px 8px rgba(0,0,0,.06); padding: 17px 0 0 32px; z-index: 3; }
.mi { height: 68.500px; display: flex; align-items: center; font-size: 27px; color: #555; }
.mi svg { width: 22px; height: 28px; flex: none; }
.mi span { margin-left: 21px; width: 84px; flex: none; }
.mi .mi-ch { width: 17px; height: 26px; }
.handle { position: absolute; width: 70px; height: 70px; border-radius: 50%; background: #506a94; z-index: 1; padding: 22px 0 0 8px; }
.handle svg { width: 26px; height: 26px; display: block; }
.h1 { left: 1890px; top: 657px; }
.h2 { left: 1890px; top: 757px; }
.h2 svg { margin-left: 4px; }
.fabs { position: absolute; left: 1828px; top: 955px; display: flex; flex-direction: column; gap: 26px; z-index: 1; }
.fab { width: 80px; height: 80px; border-radius: 50%; background: #506a94; display: flex; align-items: center; justify-content: center; }
.fab svg { width: 34px; height: 34px; }
```
